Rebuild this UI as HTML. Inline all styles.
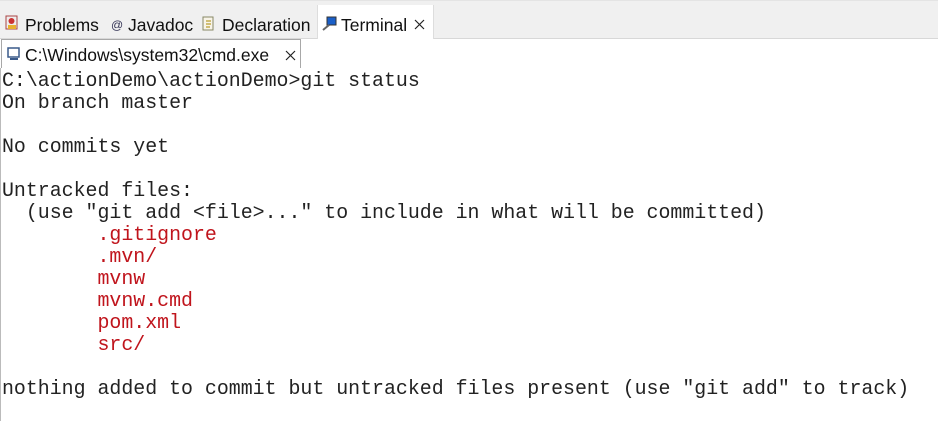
<!DOCTYPE html>
<html><head><meta charset="utf-8"><style>
body{margin:0;width:938px;height:421px;background:#fff;overflow:hidden;position:relative;font-family:"Liberation Sans",sans-serif}
.bar{position:absolute;left:0;top:0;width:938px;height:39px;background:#f0f0f0;border-top:1px solid #e4e4e4;box-sizing:border-box;border-bottom:1px solid #d8d8d8}
.t{position:absolute;top:15px;font-size:17.5px;color:#111;white-space:nowrap}
.term{position:absolute;left:317px;top:5px;width:115px;height:34px;background:#fff;border-left:1px solid #ddd;border-right:1px solid #ddd}
.sub{position:absolute;left:1px;top:39px;width:300px;height:29px;border:1px solid #a8a8a8;border-bottom:none;background:#fff;box-sizing:border-box}
.lb{position:absolute;left:0;top:68px;width:1px;height:353px;background:#bbb}
pre{position:absolute;left:2px;top:70px;margin:0;font-family:"Liberation Mono",monospace;font-size:19.9px;line-height:22px;color:#222}
.r{color:#c0141c}
.x{position:absolute}
</style></head><body>
<div class="bar"></div>
<div class="term"></div>
<svg style="position:absolute;left:5px;top:15px" width="14" height="16"><rect x="1" y="1" width="11" height="13" fill="#eee" stroke="#a44"/><circle cx="6.5" cy="6" r="3" fill="#c33"/><rect x="3" y="10" width="8" height="4" fill="#e8b030"/></svg>
<span class="t" style="left:25px">Problems</span>
<span class="t" style="left:111px;font-size:12px;top:18px;color:#335">@</span>
<span class="t" style="left:128px">Javadoc</span>
<svg style="position:absolute;left:202px;top:16px" width="14" height="16"><rect x="1" y="1" width="10" height="13" fill="#f8f4e8" stroke="#886"/><path d="M4 5h5M4 8h5M4 11h4" stroke="#a80"/></svg>
<span class="t" style="left:222px">Declaration</span>
<svg style="position:absolute;left:321px;top:16px" width="16" height="16"><rect x="6" y="1" width="9" height="8" fill="#1a5fc8" stroke="#333"/><path d="M2 14l6-5" stroke="#666" stroke-width="2"/></svg>
<span class="t" style="left:341px">Terminal</span>
<svg class="x" style="left:414px;top:19px" width="11" height="11"><path d="M1 1L10 10M10 1L1 10" stroke="#222" stroke-width="1.2"/></svg>
<div class="sub"></div>
<svg style="position:absolute;left:7px;top:47px" width="14" height="14"><rect x="1" y="1" width="11" height="9" fill="#fff" stroke="#3a5a8a" stroke-width="1.5"/><path d="M3 12h8" stroke="#3a5a8a" stroke-width="2"/></svg>
<span class="t" style="left:25px;top:45px">C:\Windows\system32\cmd.exe</span>
<svg class="x" style="left:285px;top:50px" width="11" height="11"><path d="M1 1L10 10M10 1L1 10" stroke="#222" stroke-width="1.2"/></svg>
<div class="lb"></div>
<pre>C:\actionDemo\actionDemo>git status
On branch master

No commits yet

Untracked files:
  (use "git add &lt;file>..." to include in what will be committed)
<span class="r">        .gitignore
        .mvn/
        mvnw
        mvnw.cmd
        pom.xml
        src/</span>

nothing added to commit but untracked files present (use "git add" to track)</pre>
</body></html>
